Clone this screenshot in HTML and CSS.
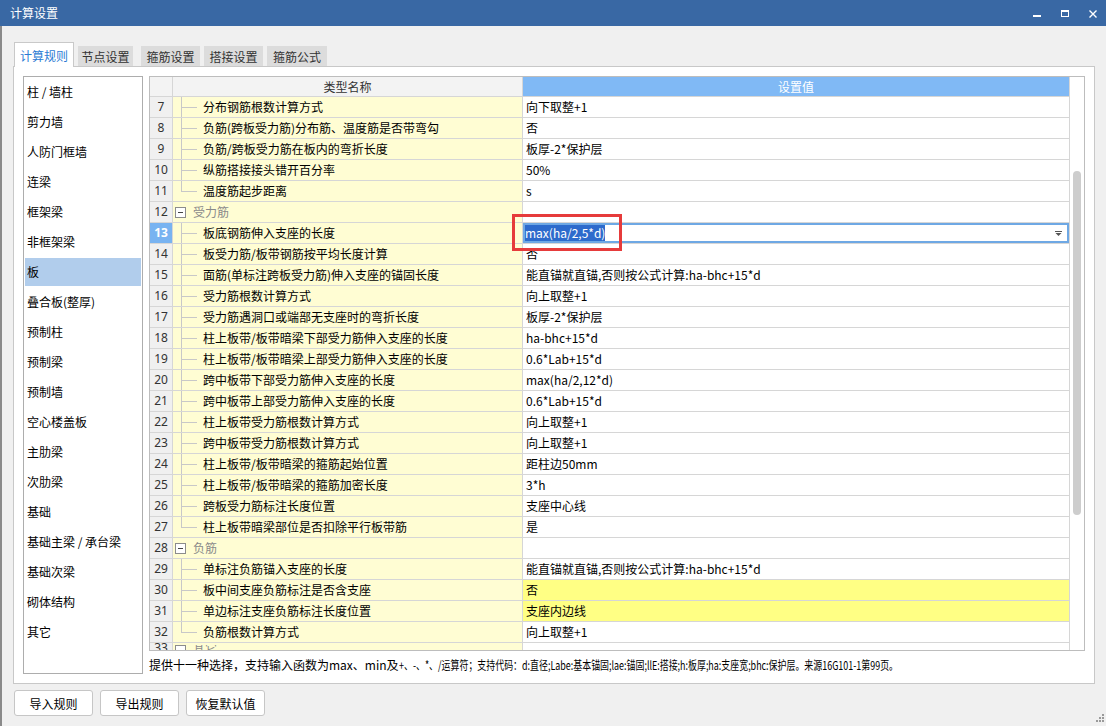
FILE: index.html
```html
<!DOCTYPE html>
<html>
<head>
<meta charset="utf-8">
<title>计算设置</title>
<link rel="stylesheet" href="styles.css">
</head>
<body>
<div class="window">
  <div class="titlebar">
    <span class="title">计算设置</span>
    <svg class="winctl" width="86" height="26" viewBox="0 0 86 26">
      <rect x="13" y="15" width="8" height="2" fill="#fff"/>
      <rect x="41.5" y="10.5" width="7" height="6" fill="none" stroke="#fff" stroke-width="1"/>
      <rect x="41" y="10" width="8" height="2" fill="#fff"/>
      <path d="M69.5 10.5 L76.5 17.5 M76.5 10.5 L69.5 17.5" stroke="#fff" stroke-width="1.4"/>
    </svg>
  </div>
  <div class="client">
    <div class="tabs">
      <div class="tab active">计算规则</div>
      <div class="tab t2">节点设置</div>
      <div class="tab t3">箍筋设置</div>
      <div class="tab t4">搭接设置</div>
      <div class="tab t5">箍筋公式</div>
    </div>
    <div class="panel">
      <ul class="cats">
        <li>柱 / 墙柱</li>
        <li>剪力墙</li>
        <li>人防门框墙</li>
        <li>连梁</li>
        <li>框架梁</li>
        <li>非框架梁</li>
        <li class="sel">板</li>
        <li>叠合板(整厚)</li>
        <li>预制柱</li>
        <li>预制梁</li>
        <li>预制墙</li>
        <li>空心楼盖板</li>
        <li>主肋梁</li>
        <li>次肋梁</li>
        <li>基础</li>
        <li>基础主梁 / 承台梁</li>
        <li>基础次梁</li>
        <li>砌体结构</li>
        <li>其它</li>
      </ul>
      <div class="right">
        <div class="tbl">
          <div class="grid">
            <div class="row head"><div class="c num"></div><div class="c name">类型名称</div><div class="c val">设置值</div></div>
            <div class="row"><div class="c num">7</div><div class="c name"><span class="tree"></span><span class="txt">分布钢筋根数计算方式</span></div><div class="c val">向下取整+1</div></div>
            <div class="row"><div class="c num">8</div><div class="c name"><span class="tree"></span><span class="txt">负筋(跨板受力筋)分布筋、温度筋是否带弯勾</span></div><div class="c val">否</div></div>
            <div class="row"><div class="c num">9</div><div class="c name"><span class="tree"></span><span class="txt">负筋/跨板受力筋在板内的弯折长度</span></div><div class="c val">板厚-2*保护层</div></div>
            <div class="row"><div class="c num">10</div><div class="c name"><span class="tree"></span><span class="txt">纵筋搭接接头错开百分率</span></div><div class="c val">50%</div></div>
            <div class="row"><div class="c num">11</div><div class="c name"><span class="tree last"></span><span class="txt">温度筋起步距离</span></div><div class="c val">s</div></div>
            <div class="row"><div class="c num">12</div><div class="c name"><span class="box"></span><span class="grp">受力筋</span></div><div class="c val"></div></div>
            <div class="row"><div class="c num cur">13</div><div class="c name"><span class="tree"></span><span class="txt">板底钢筋伸入支座的长度</span></div><div class="c val edit"><span class="selt">max(ha/2,5*d)</span><svg class="dd" width="7" height="5" viewBox="0 0 7 5"><rect x="0" y="0" width="7" height="1" fill="#555"/><path d="M0.5 2 L6.5 2 L3.5 5 Z" fill="#555"/></svg><span class="mark"></span></div></div>
            <div class="row"><div class="c num">14</div><div class="c name"><span class="tree"></span><span class="txt">板受力筋/板带钢筋按平均长度计算</span></div><div class="c val">否</div></div>
            <div class="row"><div class="c num">15</div><div class="c name"><span class="tree"></span><span class="txt">面筋(单标注跨板受力筋)伸入支座的锚固长度</span></div><div class="c val">能直锚就直锚,否则按公式计算:ha-bhc+15*d</div></div>
            <div class="row"><div class="c num">16</div><div class="c name"><span class="tree"></span><span class="txt">受力筋根数计算方式</span></div><div class="c val">向上取整+1</div></div>
            <div class="row"><div class="c num">17</div><div class="c name"><span class="tree"></span><span class="txt">受力筋遇洞口或端部无支座时的弯折长度</span></div><div class="c val">板厚-2*保护层</div></div>
            <div class="row"><div class="c num">18</div><div class="c name"><span class="tree"></span><span class="txt">柱上板带/板带暗梁下部受力筋伸入支座的长度</span></div><div class="c val">ha-bhc+15*d</div></div>
            <div class="row"><div class="c num">19</div><div class="c name"><span class="tree"></span><span class="txt">柱上板带/板带暗梁上部受力筋伸入支座的长度</span></div><div class="c val">0.6*Lab+15*d</div></div>
            <div class="row"><div class="c num">20</div><div class="c name"><span class="tree"></span><span class="txt">跨中板带下部受力筋伸入支座的长度</span></div><div class="c val">max(ha/2,12*d)</div></div>
            <div class="row"><div class="c num">21</div><div class="c name"><span class="tree"></span><span class="txt">跨中板带上部受力筋伸入支座的长度</span></div><div class="c val">0.6*Lab+15*d</div></div>
            <div class="row"><div class="c num">22</div><div class="c name"><span class="tree"></span><span class="txt">柱上板带受力筋根数计算方式</span></div><div class="c val">向上取整+1</div></div>
            <div class="row"><div class="c num">23</div><div class="c name"><span class="tree"></span><span class="txt">跨中板带受力筋根数计算方式</span></div><div class="c val">向上取整+1</div></div>
            <div class="row"><div class="c num">24</div><div class="c name"><span class="tree"></span><span class="txt">柱上板带/板带暗梁的箍筋起始位置</span></div><div class="c val">距柱边50mm</div></div>
            <div class="row"><div class="c num">25</div><div class="c name"><span class="tree"></span><span class="txt">柱上板带/板带暗梁的箍筋加密长度</span></div><div class="c val">3*h</div></div>
            <div class="row"><div class="c num">26</div><div class="c name"><span class="tree"></span><span class="txt">跨板受力筋标注长度位置</span></div><div class="c val">支座中心线</div></div>
            <div class="row"><div class="c num">27</div><div class="c name"><span class="tree last"></span><span class="txt">柱上板带暗梁部位是否扣除平行板带筋</span></div><div class="c val">是</div></div>
            <div class="row"><div class="c num">28</div><div class="c name"><span class="box"></span><span class="grp">负筋</span></div><div class="c val"></div></div>
            <div class="row"><div class="c num">29</div><div class="c name"><span class="tree"></span><span class="txt">单标注负筋锚入支座的长度</span></div><div class="c val">能直锚就直锚,否则按公式计算:ha-bhc+15*d</div></div>
            <div class="row"><div class="c num">30</div><div class="c name"><span class="tree"></span><span class="txt">板中间支座负筋标注是否含支座</span></div><div class="c val hl">否</div></div>
            <div class="row"><div class="c num">31</div><div class="c name"><span class="tree"></span><span class="txt">单边标注支座负筋标注长度位置</span></div><div class="c val hl">支座内边线</div></div>
            <div class="row"><div class="c num">32</div><div class="c name"><span class="tree last"></span><span class="txt">负筋根数计算方式</span></div><div class="c val">向上取整+1</div></div>
            <div class="row part"><div class="c num">33</div><div class="c name"><span class="box"></span><span class="grp">其它</span></div><div class="c val"></div></div>
          </div>
          <div class="vscroll"><div class="thumb"></div></div>
        </div>
        <p class="hint">提供十一种选择，支持输入函数为max、min及<span class="squeeze">+、-、*、/运算符；支持代码：d:直径;Labe:基本锚固;lae:锚固;llE:搭接;h:板厚;ha:支座宽;bhc:保护层。来源16G101-1第99页。</span></p>
      </div>
    </div>
    <div class="buttons">
      <button class="btn">导入规则</button>
      <button class="btn">导出规则</button>
      <button class="btn">恢复默认值</button>
      <svg class="grip" width="8" height="8" viewBox="0 0 8 8">
        <rect x="6" y="0" width="2" height="2" fill="#9a9a9a"/>
        <rect x="3" y="3" width="2" height="2" fill="#9a9a9a"/>
        <rect x="6" y="3" width="2" height="2" fill="#9a9a9a"/>
        <rect x="0" y="6" width="2" height="2" fill="#9a9a9a"/>
        <rect x="3" y="6" width="2" height="2" fill="#9a9a9a"/>
        <rect x="6" y="6" width="2" height="2" fill="#9a9a9a"/>
      </svg>
    </div>
  </div>
</div>
</body>
</html>
```
FILE: styles.css
```css
* { box-sizing: border-box; }
html, body { margin: 0; padding: 0; }
body {
  width: 1106px;
  height: 726px;
  overflow: hidden;
  background: #f0f0f0;
  font-family: "Noto Sans CJK SC", "Noto Sans", sans-serif;
  font-size: 12px;
  color: #000;
}
.window { display: flex; flex-direction: column; height: 726px; }
.titlebar {
  height: 26px;
  flex: none;
  background: #3968a4;
  color: #fff;
  display: flex;
  align-items: center;
  padding-left: 10px;
}
.title { font-size: 12px; line-height: 26px; }
.winctl { margin-left: auto; display: block; }

.client {
  flex: 1;
  border-left: 2px solid #8a8a8a;
  display: flex;
  flex-direction: column;
  padding: 16px 0 0 11px;
}

/* tabs */
.tabs {
  display: flex;
  align-items: flex-end;
  height: 25px;
  margin: 0 0 -1px 1px;
  position: relative;
  z-index: 1;
}
.tab {
  height: 20px;
  margin-bottom: 1px;
  background: #dcdcdc;
  color: #333;
  display: flex;
  align-items: center;
  justify-content: center;
  font-size: 12px;
}
.tab.active {
  width: 60px;
  height: 25px;
  margin-bottom: 0;
  background: #fff;
  border: 1px solid #c9c9c9;
  border-bottom: none;
  color: #2b7bd4;
  padding-top: 1px;
}
.t2 { width: 55px; margin-left: 4px; }
.t3 { width: 59px; margin-left: 8px; }
.t4 { width: 59px; margin-left: 4px; }
.t5 { width: 60px; margin-left: 4px; }

/* panel */
.panel {
  width: 1082px;
  height: 618px;
  border: 1px solid #c8c8c8;
  background: #fff;
  display: flex;
  padding: 9px;
}
.cats {
  list-style: none;
  margin: 0;
  padding: 0;
  width: 120px;
  height: 598px;
  border: 1px solid #adadad;
  flex: none;
}
.cats li {
  height: 30px;
  line-height: 30px;
  margin: 0 1px;
  padding-left: 2px;
  white-space: nowrap;
}
.cats li.sel {
  background: linear-gradient(#b1cdec, #b1cdec) 0 1px / 100% 28px no-repeat;
}
.right {
  margin-left: 6px;
  width: 936px;
  display: flex;
  flex-direction: column;
}

/* table */
.tbl {
  display: flex;
  width: 936px;
  height: 575px;
  border: 1px solid #bdbdbd;
  flex: none;
}
.grid { width: 920px; overflow: hidden; }
.vscroll { width: 14px; padding-top: 94px; background: #fff; }
.thumb {
  width: 8px;
  height: 344px;
  margin: 0 auto;
  background: #cdcdcd;
  border-radius: 4px;
}
.row {
  display: grid;
  grid-template-columns: 23px 350px 547px;
  height: 21px;
}
.row.head { height: 20px; }
.row.part { height: 7px; overflow: hidden; }
.row.part .c { align-items: flex-start; padding-top: 2px; border-bottom: none; }
.row.part .box { height: 5px; border-bottom: none; background: #fff; }
.row.part .grp { line-height: 5px; overflow: hidden; height: 5px; }
.row.part .num { line-height: 5px; overflow: hidden; height: 7px; }
.c {
  border-right: 1px solid #d6d6d6;
  border-bottom: 1px solid #d6d6d6;
  display: flex;
  align-items: center;
  white-space: nowrap;
  overflow: hidden;
  line-height: 16px;
}
.num { background: #f0f0f0; justify-content: center; color: #333; font-family: "Noto Sans", "Noto Sans CJK SC", sans-serif; font-size: 12px; }
.num.cur { background: #78b3f1; color: #fff; font-weight: bold; }
.name { background: #fffdd3; }
.val { background: #fff; padding-left: 3px; }
.val.hl { background: #ffff84; }
.head .num { background: #f3f3f3; }
.head .name { background: #f3f3f3; justify-content: center; color: #333; }
.head .val { background: #80b9f5; color: #fff; justify-content: center; padding-left: 0; }

.tree {
  flex: none;
  align-self: stretch;
  width: 16px;
  margin-left: 8px;
  background:
    linear-gradient(#c8c8c8, #c8c8c8) 0 0 / 1px 100% no-repeat,
    linear-gradient(#c8c8c8, #c8c8c8) 0 50% / 16px 1px no-repeat;
}
.tree.last {
  background:
    linear-gradient(#c8c8c8, #c8c8c8) 0 0 / 1px 10px no-repeat,
    linear-gradient(#c8c8c8, #c8c8c8) 0 50% / 16px 1px no-repeat;
}
.txt { margin-left: 6px; }
.box {
  flex: none;
  width: 11px;
  height: 11px;
  margin-left: 2px;
  border: 1px solid #8c8c8c;
  background: linear-gradient(#444, #444) center / 5px 1px no-repeat, #fff;
}
.grp { margin-left: 7px; color: #8a8a8a; }

.val.edit {
  position: relative;
  overflow: visible;
  box-shadow: inset 0 0 0 2px #6ea8e4;
  padding-left: 2px;
  padding-right: 7px;
}
.selt {
  background: #2d6bcc;
  color: #fff;
  line-height: 16px;
}
.dd { margin-left: auto; display: block; }
.mark {
  position: absolute;
  left: -11px;
  top: -9px;
  width: 110px;
  height: 37px;
  border: 3px solid #e63b3b;
}

.hint {
  margin: 6px 0 0 0;
  line-height: 16px;
  white-space: nowrap;
}
.squeeze {
  display: inline-block;
  transform: scaleX(0.745);
  transform-origin: left center;
}

/* buttons */
.buttons {
  flex: 1;
  display: flex;
  align-items: flex-start;
  gap: 7px;
  margin: 6px 0 0 1px;
}
.btn {
  width: 79px;
  height: 26px;
  border: 1px solid #c6c6c6;
  border-radius: 3px;
  background: #fff;
  font: inherit;
  color: #000;
  padding: 0;
}
.grip { margin-left: auto; align-self: flex-end; margin-right: 2px; margin-bottom: 4px; }
```
